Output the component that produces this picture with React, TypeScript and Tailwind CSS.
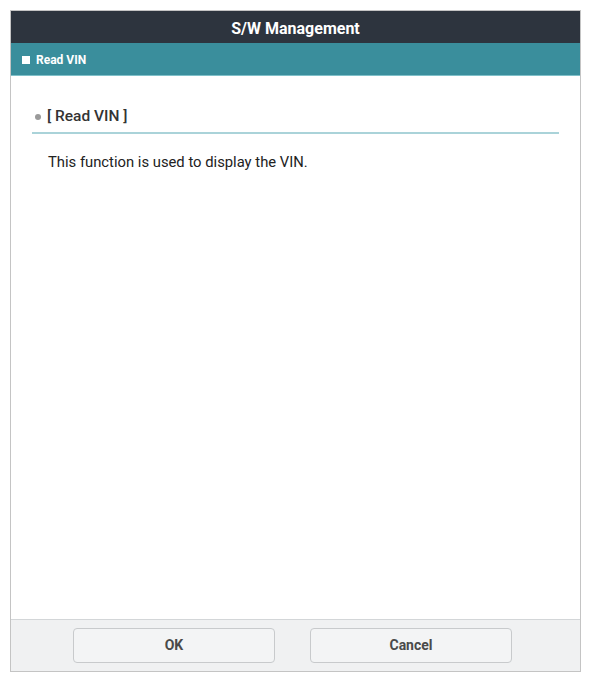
import React from "react";

export default function App() {
  return (
    <div className="w-[591px] h-[681px] bg-white p-[10px]" style={{ fontFamily: "Roboto, 'Noto Sans', sans-serif" }}>
      <div className="w-[571px] h-[662px] flex flex-col border border-[#c4c4c4] bg-white">
        <div className="h-[32px] bg-[#2d343e] flex items-center justify-center pt-[3px] text-white font-bold text-[16px]">
          S/W Management
        </div>
        <div className="h-[33px] bg-[#3a8e9c] border-b border-[#7fc0c9] flex items-center pl-[11px] pt-[1px] gap-[6px] text-white font-bold text-[12px]">
          <span className="w-[8px] h-[8px] bg-white" />
          Read VIN
        </div>
        <div className="flex-1 px-[21px] pt-[29px]">
          <div className="flex items-center gap-[6px] pl-[3px] pb-[4px] border-b-2 border-[#aad3d9] text-[15.5px] font-medium text-[#333]">
            <span className="w-[6px] h-[6px] rounded-full bg-[#9a9a9a]" />
            [ Read VIN ]
          </div>
          <div className="pl-[16px] pt-[17px] text-[14.8px] text-[#222]">
            This function is used to display the VIN.
          </div>
        </div>
        <div className="h-[52px] bg-[#f0f1f2] border-t border-[#d3d6d8] flex items-center justify-start pl-[62px] gap-[35px]">
          <button className="w-[202px] h-[35px] rounded-[4px] border border-[#c8cacc] bg-[#f3f4f5] text-[14px] font-bold text-[#4a4a4a]">
            OK
          </button>
          <button className="w-[202px] h-[35px] rounded-[4px] border border-[#c8cacc] bg-[#f3f4f5] text-[14px] font-bold text-[#4a4a4a]">
            Cancel
          </button>
        </div>
      </div>
    </div>
  );
}
